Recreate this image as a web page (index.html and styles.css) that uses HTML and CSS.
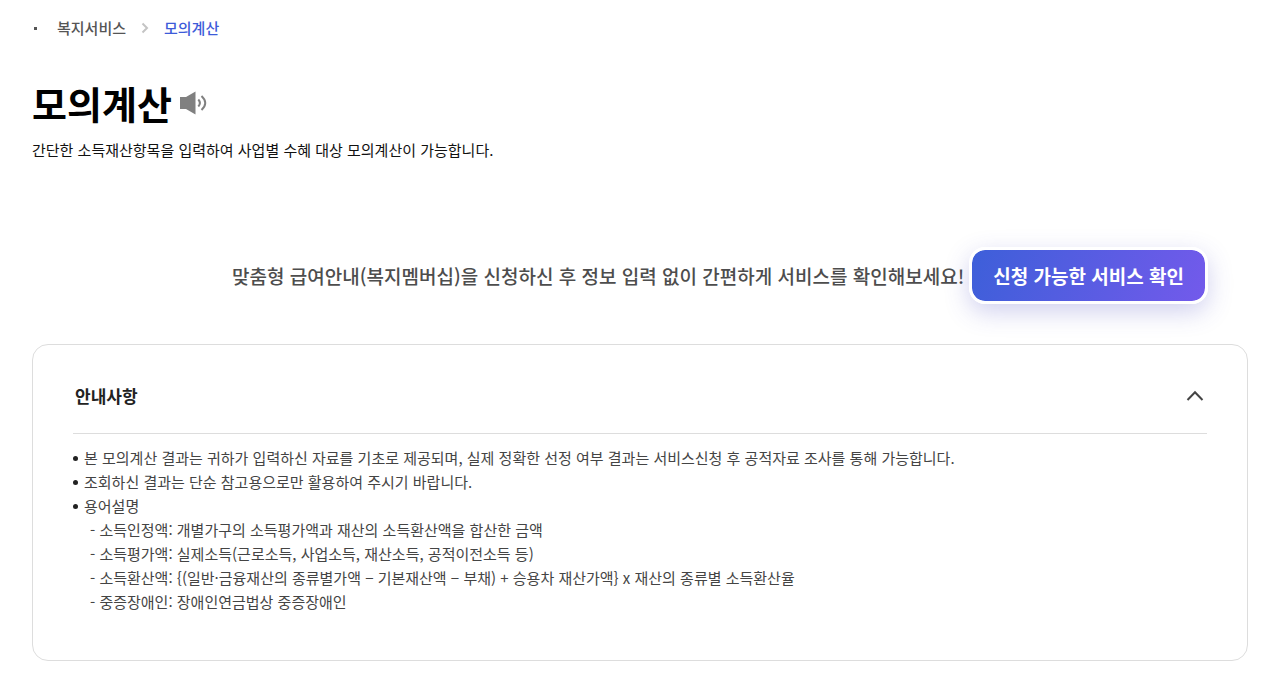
FILE: index.html
```html
<!DOCTYPE html>
<html lang="ko">
<head>
<meta charset="utf-8">
<meta name="viewport" content="width=device-width, initial-scale=1">
<title>모의계산</title>
<link rel="stylesheet" href="styles.css">
</head>
<body>
<main class="page">
  <nav class="breadcrumb" aria-label="현재 위치">
    <span class="home-dot"></span>
    <a class="crumb" href="#">복지서비스</a>
    <svg class="crumb-arrow" viewBox="0 0 8 12" aria-hidden="true"><path d="M1.5 1.5 6 6l-4.5 4.5"/></svg>
    <a class="crumb current" href="#" aria-current="page">모의계산</a>
  </nav>

  <header class="heading">
    <h1 class="title">모의계산</h1>
    <button class="speak" type="button" aria-label="음성 듣기">
      <svg class="speaker" viewBox="0 0 28 26" aria-hidden="true">
        <path class="horn" d="M0 7h6L15.500 1.500v23L6 19H0z"/>
        <path class="wave" d="M18.300 9.500q3.200 3.500 0 7M21.500 6q7.500 7 0 14"/>
      </svg>
    </button>
  </header>
  <p class="lead">간단한 소득재산항목을 입력하여 사업별 수혜 대상 모의계산이 가능합니다.</p>

  <section class="promo">
    <p class="promo-text">맞춤형 급여안내(복지멤버십)을 신청하신 후 정보 입력 없이 간편하게 서비스를 확인해보세요!</p>
    <button class="promo-button" type="button">신청 가능한 서비스 확인</button>
  </section>

  <section class="notice">
    <h2 class="notice-heading">
      <button class="notice-toggle" type="button" aria-expanded="true" aria-controls="notice-body">
        안내사항
        <svg class="chevron" viewBox="0 0 18 12" aria-hidden="true"><path d="M1.500 10 9 2.300 16.500 10"/></svg>
      </button>
    </h2>
    <ul class="notice-list" id="notice-body">
      <li class="notice-item">본 모의계산 결과는 귀하가 입력하신 자료를 기초로 제공되며, 실제 정확한 선정 여부 결과는 서비스신청 후 공적자료 조사를 통해 가능합니다.</li>
      <li class="notice-item">조회하신 결과는 단순 참고용으로만 활용하여 주시기 바랍니다.</li>
      <li class="notice-item">용어설명
        <ul class="terms">
          <li>- 소득인정액: 개별가구의 소득평가액과 재산의 소득환산액을 합산한 금액</li>
          <li>- 소득평가액: 실제소득(근로소득, 사업소득, 재산소득, 공적이전소득 등)</li>
          <li>- 소득환산액: {(일반·금융재산의 종류별가액 − 기본재산액 − 부채) + 승용차 재산가액} x 재산의 종류별 소득환산율</li>
          <li>- 중증장애인: 장애인연금법상 중증장애인</li>
        </ul>
      </li>
    </ul>
  </section>
</main>
</body>
</html>
```
FILE: styles.css
```css
* { box-sizing: border-box; }

body {
  margin: 0;
  background: #fff;
  color: #111;
  font-family: "Noto Sans CJK KR", sans-serif;
  font-size: 15px;
  line-height: 24px;
}

h1, h2, p, ul { margin: 0; padding: 0; }
ul { list-style: none; }
button { border: 0; font-family: inherit; cursor: pointer; }

.page { padding: 16px 31px 16px 32px; }

.breadcrumb { display: flex; align-items: center; }
.home-dot { width: 3px; height: 3px; margin: 0 20px 0 2px; background: #555; }
.crumb { color: #555; font-weight: 500; text-decoration: none; }
.crumb.current { color: #3d5bd9; }
.crumb-arrow { width: 8px; height: 12px; margin: 0 15px; fill: none; stroke: #c4c4c4; stroke-width: 2; }

.heading { display: flex; align-items: center; gap: 8px; margin-top: 35px; }
.title { color: #000; font-size: 38px; font-weight: 700; line-height: 56px; }
.speak { display: flex; padding: 0; background: none; }
.speaker { width: 28px; height: 26px; }
.horn { fill: #808080; }
.wave { fill: none; stroke: #808080; stroke-width: 2; }

.lead { margin-top: 7px; }

.promo {
  display: flex;
  align-items: center;
  justify-content: flex-end;
  gap: 5px;
  margin-top: 85px;
  padding-right: 40px;
}
.promo-text { color: #4d4d4d; font-size: 19px; font-weight: 500; line-height: 28px; }
.promo-button {
  flex: none;
  padding: 12px 21px 11px;
  border: 3px solid #fff;
  border-radius: 16px;
  background: linear-gradient(110deg, #3d5fd9, #735aeb) padding-box;
  box-shadow: 0 8px 24px rgba(70, 70, 190, 0.25);
  color: #fff;
  font-size: 19px;
  font-weight: 700;
  line-height: 28px;
}

.notice {
  margin-top: 40px;
  padding: 32px 40px 46px;
  border: 1px solid #ddd;
  border-radius: 16px;
}
.notice-heading { border-bottom: 1px solid #ddd; }
.notice-toggle {
  display: flex;
  align-items: center;
  justify-content: space-between;
  width: 100%;
  padding: 7px 3px 25px 2px;
  background: none;
  color: #222;
  font-size: 17px;
  font-weight: 700;
  line-height: 24px;
  text-align: left;
}
.chevron { width: 18px; height: 12px; fill: none; stroke: #444; stroke-width: 2; }

.notice-list { margin-top: 12px; color: #444; }
.notice-item { position: relative; padding-left: 11px; }
.notice-item::before {
  content: "";
  position: absolute;
  top: 10px;
  left: 0;
  width: 5px;
  height: 5px;
  border-radius: 50%;
  background: #222;
}
.terms { padding-left: 6px; }
```
